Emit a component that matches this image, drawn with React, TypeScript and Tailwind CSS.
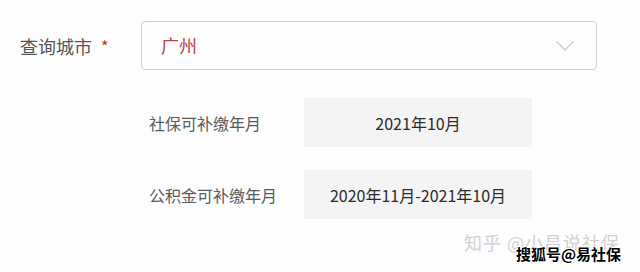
import { ChevronDown } from "lucide-react";

const font = "font-['Noto_Sans_CJK_SC','Noto_Sans',sans-serif]";

type InfoRowProps = {
	label: string;
	value: string;
};

function InfoRow({ label, value }: InfoRowProps) {
	return (
		<div className="flex items-center pl-[149px]">
			<div className="w-[155px] text-[16px] leading-none text-[#5a5a5a]">{label}</div>
			<div className="flex h-[49px] w-[228px] items-center justify-center bg-[#f4f4f4] text-[16px] text-[#2b2b2b]">
				{value}
			</div>
		</div>
	);
}

export default function App() {
	return (
		<div className={`relative h-[272px] w-[640px] overflow-hidden bg-[#fdfdfd] ${font}`}>
			<div className="flex items-center pt-[21px]">
				<div className="flex w-[141px] items-center pl-[20px] text-[18px] leading-none text-[#555]">
					<span>查询城市</span>
					<span className="ml-[9px] text-[16px] text-[#c0392b]">*</span>
				</div>
				<div className="flex h-[49px] w-[456px] items-center justify-between rounded-[4px] border border-[#cfcfcf] bg-[#fefefe] pl-[19px] pr-[15px]">
					<span className="text-[18px] text-[#b8434a]">广州</span>
					<ChevronDown className="size-[32px] text-[#c8c8c8]" strokeWidth={0.9} />
				</div>
			</div>

			<div className="mt-[28px] flex flex-col gap-[23px]">
				<InfoRow label="社保可补缴年月" value="2021年10月" />
				<InfoRow label="公积金可补缴年月" value="2020年11月-2021年10月" />
			</div>

			{/* watermarks */}
			<div className="absolute left-[464px] top-[229px] text-[18px] tracking-[1px] text-[#d2d2d2]">
				知乎 @小昌说社保
			</div>
			<div className="absolute left-[516px] top-[243px] text-[15px] font-bold text-black [text-shadow:-1px_-1px_0_#fff,1px_-1px_0_#fff,-1px_1px_0_#fff,1px_1px_0_#fff]">
				搜狐号@易社保
			</div>
		</div>
	);
}
